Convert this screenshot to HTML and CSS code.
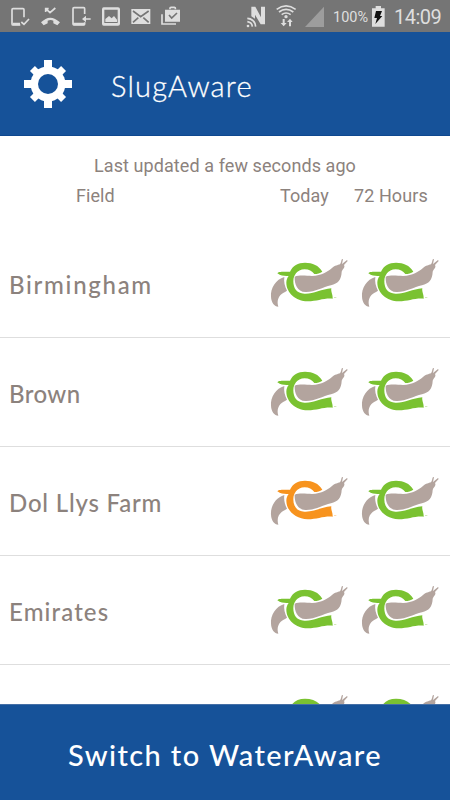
FILE: index.html
```html
<!DOCTYPE html>
<html lang="en">
<head>
<meta charset="utf-8">
<title>SlugAware</title>
<link rel="stylesheet" href="styles.css">
</head>
<body>
<svg class="defs" aria-hidden="true">
  <symbol id="slug" viewBox="0 0 273 198">
    <path class="skin" d="M67 81C42 88 25 114 27 140C28 158 37 169 49 170C44 153 49 140 59 132C65 127 71 126 75 122C68 109 65 95 67 81Z"/>
    <path class="ring" d="M46 70C49 64 58 65 84 65C92 47 108 38 129 38C152 38 170 46 181 65C174 70 166 72 157 72C150 63 141 58 128 58C116 58 107 63 102 70C97 77 94 83 94 94C94 115 104 130 127 131C151 133 178 118 208 115C206 126 213 134 212 146C184 144 166 154 137 154C101 153 73 128 73 98C73 90 76 83 80 78C68 78 58 79 46 70Z"/>
    <path class="skin" d="M98 80C114 74 134 78 150 78C180 77 196 65 210 54C220 46 226 46 234 43C238 38 237 32 240 27L243 28L240 42L255 30L257 33L246 45C251 53 240 58 239 66C238 89 228 101 207 106C182 112 158 127 130 126C106 125 97 102 98 80Z"/>
    <path class="ring" d="M216 142h7v2h-7z" opacity=".5"/>
  </symbol>
</svg>
<div class="screen">
  <div class="status">
    <svg class="status-left" viewBox="0 0 570 96">
      <g class="line">
        <path d="M72 52V29q0-3-3-3H39q-3 0-3 3v42q0 4 3 4h22M64 66l8 7 15-16"/>
        <path d="M254 42V26q0-3-3-3h-29q-3 0-3 3v46q0 3 3 3h29q3 0 3-3v-5M272 57h-22"/>
        <path d="M137 26l13 12 16-14M137 36V26h9"/>
        <path d="M486 43v29h42"/>
        <path d="M510 28v-4q0-2 3-2h10q3 0 3 2v4"/>
      </g>
      <g class="solid">
        <path d="M38 68h22v8H38zM219 68h35v8h-35zM246 57l12-10v20zM123 67q27-28 57 0l-8 9-12-6v-8q-8-4-17 0v8l-12 6z"/>
        <path fill-rule="evenodd" d="M311 22h43q6 0 6 6v43q0 6-6 6h-43q-5 0-5-6V28q0-6 5-6zM313 29v40h40V29z"/>
        <path d="M316 66V57l11-9 8 7 7-7 9 11v7zM394 27h57v45h-57zM495 29h45v36h-45z"/>
      </g>
      <path class="cut" d="M399 33l23 17 24-17M399 67l16-14M446 67l-16-14M507 45l8 9 16-15"/>
    </svg>
    <svg class="status-right" viewBox="0 0 255 96">
      <g class="solid">
        <path d="M49 20h12l17 32V20h12v53H77L60 44v12L49 49z"/>
        <circle cx="39" cy="78" r="4"/>
        <circle cx="153" cy="50" r="5"/>
        <path d="M146 79l-9-10h6V57h6v12h6zM165 56l8 10h-5v13h-6V66h-6z"/>
      </g>
      <path class="wave" d="M37 65q14 2 15 15M37 55q23 2 25 25M125 28q28-21 57 0M132 36q21-16 43 0M140 44q13-10 27 0"/>
      <path class="signal" d="M267 20v61h-57z"/>
    </svg>
    <span class="percent">100%</span>
    <svg class="battery" viewBox="0 0 39 63"><path class="solid" d="M11 0h16v7h11v55H0V7h11z"/><path class="bolt" d="M12 15h18l-6 15h7L10 54l5-18H7z"/></svg>
    <span class="clock">14:09</span>
  </div>
  <header class="header">
    <svg class="gear" viewBox="-24 -24 48 48">
      <path d="M-4-24h8v48h-8zM-24-4h48v8h-48z"/><path transform="rotate(45)" d="M-3.5-22h7v44h-7zM-22-3.5h44v7h-44z"/>
      <circle r="17.5"/><circle class="hole" r="10"/>
    </svg>
    <h1 class="title">SlugAware</h1>
  </header>
  <main class="content">
    <p class="updated">Last updated a few seconds ago</p>
    <div class="heads"><span class="field">Field</span><span class="today">Today</span><span class="hours">72 Hours</span></div>
    <ul class="list">
      <li class="row"><span class="name birmingham">Birmingham</span><svg class="slug"><use href="#slug"/></svg><svg class="slug"><use href="#slug"/></svg></li>
      <li class="row"><span class="name brown">Brown</span><svg class="slug"><use href="#slug"/></svg><svg class="slug"><use href="#slug"/></svg></li>
      <li class="row"><span class="name farm">Dol Llys Farm</span><svg class="slug warn"><use href="#slug"/></svg><svg class="slug"><use href="#slug"/></svg></li>
      <li class="row"><span class="name emirates">Emirates</span><svg class="slug"><use href="#slug"/></svg><svg class="slug"><use href="#slug"/></svg></li>
      <li class="row"><span class="name"></span><svg class="slug"><use href="#slug"/></svg><svg class="slug"><use href="#slug"/></svg></li>
    </ul>
  </main>
  <footer class="footer"><span>Switch to WaterAware</span></footer>
</div>
</body>
</html>
```
FILE: styles.css
```css
* { box-sizing: border-box; margin: 0; padding: 0; }
body { width: 450px; height: 800px; overflow: hidden; background: #fff; }
.defs { position: absolute; width: 0; height: 0; }
.screen { display: flex; flex-direction: column; height: 800px; }
.status { display: flex; flex: none; height: 32px; background: #757575; color: #dedede; font-family: Roboto, sans-serif; }
.status-left { width: 190px; height: 32px; }
.status-right { width: 85px; height: 32px; margin-left: 45px; margin-right: 5px; overflow: visible; }
.solid { fill: #dedede; }
.line { fill: none; stroke: #dedede; stroke-width: 5; }
.cut { fill: none; stroke: #757575; stroke-width: 5; }
.wave { fill: none; stroke: #dedede; stroke-width: 5; }
.signal { fill: #9d9d9d; }
.percent { width: 47px; padding-left: 8px; font-size: 14.5px; line-height: 35px; white-space: nowrap; }
.battery { width: 13px; height: 21px; margin-top: 6px; }
.bolt { fill: #111; }
.clock { margin-left: 9px; font-size: 20px; line-height: 35px; letter-spacing: -0.5px; }
.header { display: flex; flex: none; align-items: center; height: 104px; padding-left: 24px; background: #165299; border-bottom: 1px solid #0e488f; }
.gear { width: 48px; height: 48px; fill: #fff; }
.gear .hole { fill: #165299; }
.title { margin: 5px 0 0 39px; color: #fff; font: 300 29px/40px Lato, sans-serif; letter-spacing: 1.2px; -webkit-text-stroke: 0.3px #fff; }
.content { flex: 1; min-height: 0; overflow: hidden; }
.updated { padding-top: 18px; font: 18px/24px Roboto, sans-serif; letter-spacing: 0.08px; text-align: center; color: #8c827d; }
.heads { display: flex; height: 31px; padding: 6px 0 0 76px; font: 18px/24px Roboto, sans-serif; letter-spacing: 0.08px; color: #8c827d; }
.field { width: 204px; }
.today { width: 74px; }
.list { list-style: none; padding-top: 20px; }
.row { display: flex; align-items: flex-start; height: 109px; border-bottom: 1px solid #dedede; }
.name { width: 262px; padding: 41px 0 0 9px; font: 500 24px/30px Lato, sans-serif; letter-spacing: 0.9px; color: #8c827d; white-space: nowrap; }
.birmingham { letter-spacing: 1.7px; }
.brown { letter-spacing: 0.4px; }
.farm { letter-spacing: 0.8px; }
.emirates { letter-spacing: 1.1px; }
.slug { width: 91px; height: 66px; margin-top: 21px; color: #7ac231; }
.warn { color: #f7931e; }
.ring { fill: currentColor; }
.skin { fill: #b3a49e; }
.footer { display: flex; flex: none; align-items: center; justify-content: center; height: 96px; padding-top: 4px; border-top: 1px solid #456fa6; background: #165299; color: #fff; font: 500 29px/36px Lato, sans-serif; letter-spacing: 1.4px; }
```
